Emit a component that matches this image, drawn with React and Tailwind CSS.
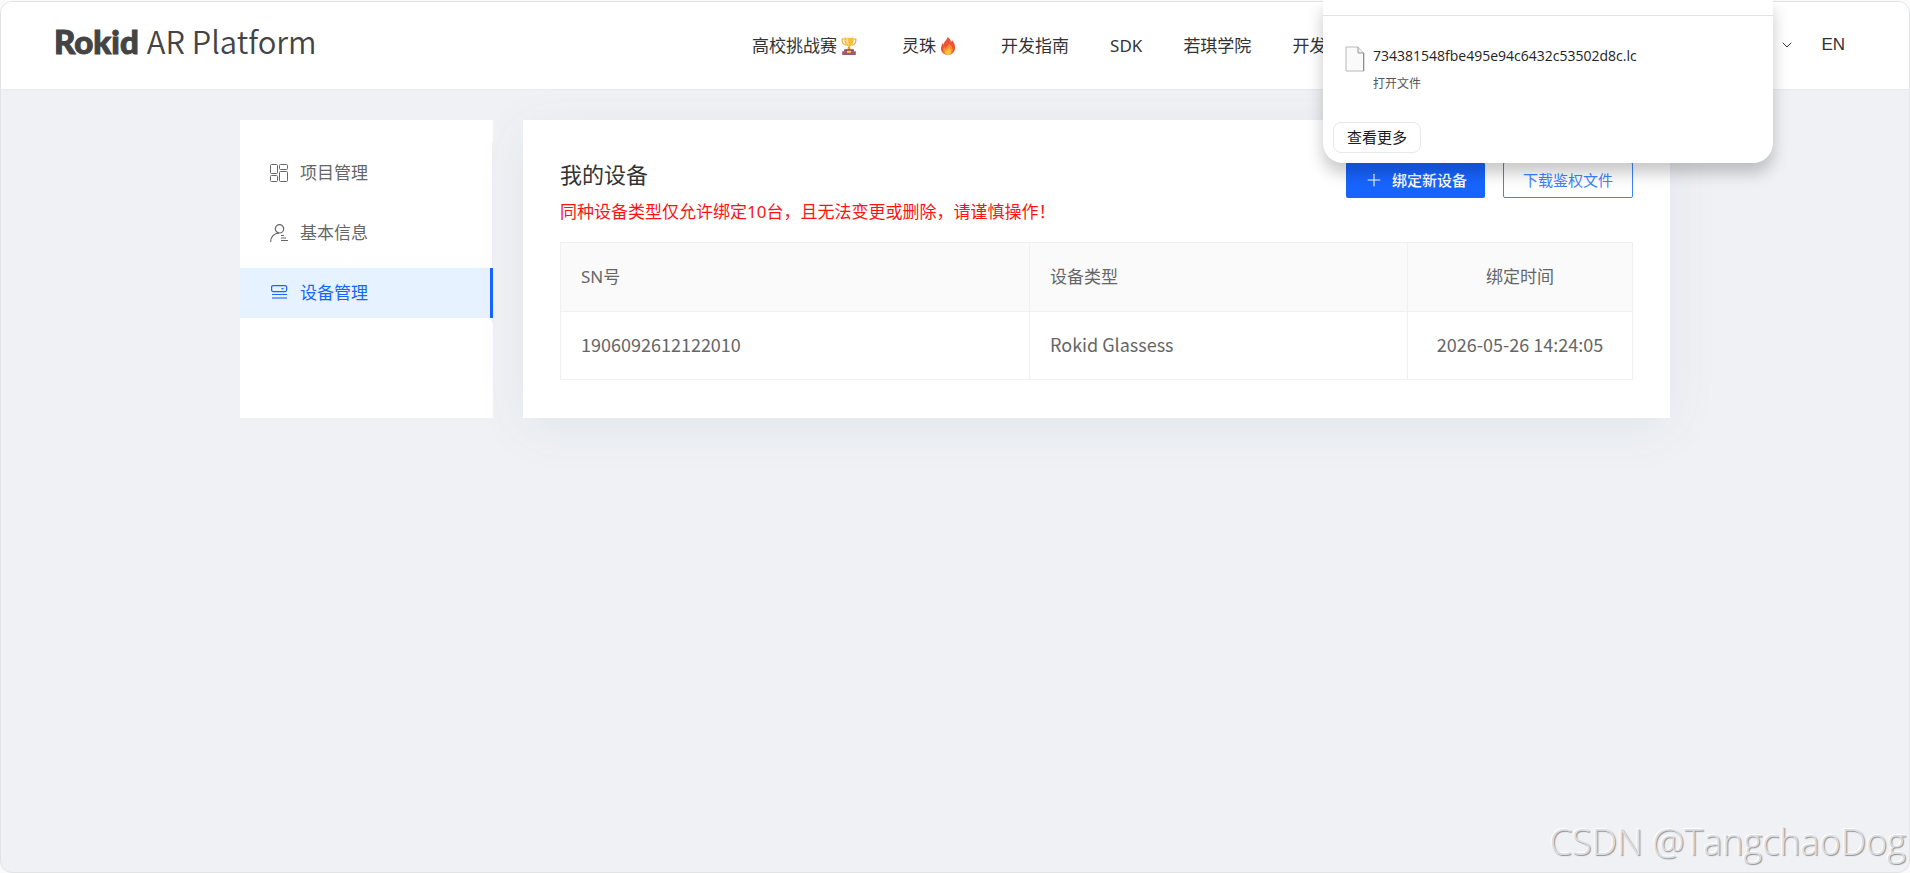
import { ChevronDown, Plus } from 'lucide-react';

function TrophyIcon() {
  return (
    <svg width="16" height="18" viewBox="0 0 16 18" aria-hidden="true">
      <path d="M4 2H1.200C.8 5.500 2 7.600 5 8.200M12 2h2.800c.4 3.500-.8 5.600-3.800 6.200" fill="none" stroke="#f2a93b" strokeWidth="1.200" />
      <path d="M3.400.8h9.200c.2 5-1 8.400-4.600 8.900C4.400 9.200 3.200 5.800 3.400.8z" fill="#fbbd3a" />
      <path d="M5 1.500h2.200c-.2 2.800.2 5 1 7C5.800 7.800 4.900 5 5 1.500z" fill="#fde08a" />
      <path d="M7.100 9.400h1.800l.9 3.600H6.200z" fill="#ef9a2d" />
      <path d="M3.400 12.300h9.200l.6 2.200H2.800z" fill="#8a4a5c" />
      <path d="M1.200 14.300h13.600V18H1.200z" fill="#a3566a" />
      <path d="M6 13.700h4v2H6z" fill="#fbc94b" />
    </svg>
  );
}

function FlameIcon() {
  return (
    <svg width="16" height="18" viewBox="0 0 16 18" aria-hidden="true">
      <path d="M7.600 0c2.500 1.400 3.300 3.300 3.300 5.100.7-.4 1-1.100 1.100-1.900 2.200 2.300 3.300 5 3 8-.3 3.900-3 6.600-6.900 6.600S1 15.300 1 11.700c0-2.600 1-4.200 1.800-6 .2 1 .5 1.600 1 2C3.600 4.300 7.200 3.200 7.600 0z" fill="#ee5138" />
      <path d="M9.500 6c.2 2.200 3.300 3.500 3.300 7 0 2.800-1.900 4.800-4.700 4.800-3 0-5-1.900-5-4.600 0-1.700.7-2.800 1.400-3.700.2 1 .6 1.500 1.200 1.700C5.900 9 9 8.600 9.500 6z" fill="#fb8c2e" />
      <path d="M9 10.500c.2 1.500 2 2 2 4.200 0 1.900-1.200 3.100-2.900 3.100-1.800 0-3-1.200-3-2.900 0-1 .4-1.700.9-2.200.2.600.5.900.9 1 0-1.400 1.700-1.600 2.100-3.200z" fill="#fdc53f" />
    </svg>
  );
}

function ProjectIcon() {
  return (
    <svg width="18" height="18" viewBox="0 0 18 18" fill="none" stroke="currentColor" aria-hidden="true">
      <rect x=".5" y=".5" width="7" height="9" rx="1" />
      <rect x="9.500" y=".5" width="8" height="5" rx="1" />
      <rect x=".5" y="11.500" width="7" height="6" rx="1" />
      <rect x="9.500" y="7.500" width="8" height="10" rx="1" />
    </svg>
  );
}

function ProfileIcon() {
  return (
    <svg width="18" height="18" viewBox="0 0 18 18" fill="none" stroke="currentColor" strokeWidth="1.200" aria-hidden="true">
      <circle cx="9.500" cy="4.800" r="4.200" />
      <path d="M.6 18c0-5 3.400-8.900 8.400-9M11 11.500h3M11 14h5M11 16.500h7" />
    </svg>
  );
}

function DeviceIcon() {
  return (
    <svg width="18" height="18" viewBox="0 0 18 18" fill="none" stroke="currentColor" aria-hidden="true">
      <rect x="1.600" y="1.600" width="15" height="6" rx="1.500" strokeWidth="1.200" />
      <path d="M11.500 4.700h2" strokeWidth="1.400" />
      <path d="M2 10.500h15" />
      <path d="M2 14h15" strokeWidth="2" opacity=".55" />
    </svg>
  );
}

function FileIcon() {
  return (
    <svg width="20" height="26" viewBox="0 0 20 26" aria-hidden="true">
      <path d="M1 1h12l6 6v18H1z" fill="#fafafa" stroke="#b8b8b8" />
      <path d="M18.500 7v18" stroke="#8f8f8f" />
      <path d="M13 1v6h6" fill="#ececec" stroke="#9a9a9a" />
    </svg>
  );
}

const menu = [
  { label: '项目管理', Icon: ProjectIcon },
  { label: '基本信息', Icon: ProfileIcon },
  { label: '设备管理', Icon: DeviceIcon, active: true },
];

const devices = [{ sn: '1906092612122010', type: 'Rokid Glassess', time: '2026-05-26 14:24:05' }];

function Header() {
  return (
    <header className="flex h-[88px] items-center border-b border-[#e9eaee] bg-white pr-16 pl-[53px]">
      <a href="#home" className="flex items-baseline gap-2 pb-[10px] text-[#444]">
        <span className="font-[Lato] text-[33px] leading-10 font-black [-webkit-text-stroke:1px_#444]">Rokid</span>
        <span className="font-['Noto_Sans_CJK_SC','Noto_Sans',sans-serif] text-[31px] leading-10 font-[350]">AR Platform</span>
      </a>
      <nav className="ml-auto flex items-center gap-[41px] text-[17px] whitespace-nowrap text-[#333]">
        <a href="#contest" className="flex items-center gap-1 pr-1">高校挑战赛<TrophyIcon /></a>
        <a href="#lingzhu" className="flex items-center gap-1 pr-1">灵珠<FlameIcon /></a>
        <a href="#guide">开发指南</a>
        <a href="#sdk">SDK</a>
        <a href="#academy">若琪学院</a>
        <a href="#dev">开发</a>
      </nav>
      <div className="ml-[453px] flex items-center gap-[26px] pb-0.5 text-[#333]">
        <button type="button" aria-label="展开菜单"><ChevronDown size={16} strokeWidth={1.5} /></button>
        <button type="button" className="font-['Liberation_Sans',sans-serif] text-[17px]">EN</button>
      </div>
    </header>
  );
}

function Sidebar() {
  return (
    <aside className="w-[253px] shrink-0 bg-white pt-[23px]">
      <ul className="border-r border-[#f0f0f0]">
        {menu.map(({ label, Icon, active }) => (
          <li key={label} className="py-[5px]">
            <a
              href={'#' + label}
              className={
                active
                  ? '-mr-px flex h-[50px] items-center gap-3 border-r-3 border-[#1764ff] bg-[#e6f2ff] pl-[30px] text-[17px] text-[#1764ff]'
                  : 'flex h-[50px] items-center gap-3 pl-[30px] text-[17px] text-[#666]'
              }
            >
              <Icon />
              {label}
            </a>
          </li>
        ))}
      </ul>
    </aside>
  );
}

function DevicePanel() {
  return (
    <main className="min-w-0 flex-1 bg-white px-[37px] pt-[37px] pb-[38px] shadow-[0_10px_50px_rgba(20,100,120,0.07)]">
      <div className="flex items-start justify-between">
        <div>
          <h1 className="text-[22px] leading-[34px] text-[#333]">我的设备</h1>
          <p className="mt-[6px] text-[17px] leading-[30px] text-[#fb1414]">同种设备类型仅允许绑定10台，且无法变更或删除，请谨慎操作！</p>
        </div>
        <div className="mt-[5px] flex gap-[18px] text-[15px]">
          <button type="button" className="flex h-9 items-center gap-2 rounded-xs bg-[#1764ff] px-[18px] font-medium text-white">
            <Plus size={20} strokeWidth={1.3} />
            绑定新设备
          </button>
          <button type="button" className="h-9 rounded-xs border border-[#3d83ff] bg-white px-[19px] text-[#3d83ff]">下载鉴权文件</button>
        </div>
      </div>
      <table className="mt-[15px] w-full table-fixed border-collapse text-[17px] text-[#666]">
        <colgroup>
          <col />
          <col className="w-[378px]" />
          <col className="w-[225px]" />
        </colgroup>
        <thead className="bg-[#fafafa]">
          <tr className="h-[69px]">
            <th className="border border-[#f0f0f0] px-5 text-left font-normal">SN号</th>
            <th className="border border-[#f0f0f0] px-5 text-left font-normal">设备类型</th>
            <th className="border border-[#f0f0f0] px-5 text-center font-normal">绑定时间</th>
          </tr>
        </thead>
        <tbody className="font-['Noto_Sans_CJK_SC',sans-serif] text-lg">
          {devices.map((d) => (
            <tr key={d.sn} className="h-[68px]">
              <td className="border border-[#f0f0f0] px-5 pb-1">{d.sn}</td>
              <td className="border border-[#f0f0f0] px-5 pb-1">{d.type}</td>
              <td className="border border-[#f0f0f0] px-5 pb-1 text-center whitespace-nowrap">{d.time}</td>
            </tr>
          ))}
        </tbody>
      </table>
    </main>
  );
}

function DownloadPopup() {
  return (
    <section
      aria-label="下载"
      className="absolute top-0 right-[137px] w-[450px] rounded-b-[20px] bg-white pt-[15px] pb-[10px] font-['Open_Sans','Noto_Sans_CJK_SC',sans-serif] shadow-[0_10px_16px_rgba(0,0,0,0.22)]"
    >
      <div className="flex gap-2 border-t border-[#e3e3e3] px-[22px] pt-[30px]">
        <FileIcon />
        <div>
          <p className="text-sm leading-5 text-[#222]">734381548fbe495e94c6432c53502d8c.lc</p>
          <a href="#open" className="mt-2 block text-xs leading-5 text-[#555]">打开文件</a>
        </div>
      </div>
      <button type="button" className="mt-7 ml-[10px] block h-[31px] rounded-lg border border-[#e8e8e8] px-[13px] text-[15px] text-[#1b1b1b]">
        查看更多
      </button>
    </section>
  );
}

export default function App() {
  return (
    <div className="relative flex min-h-screen flex-col bg-[#fafafa] pt-px font-['Noto_Sans','Noto_Sans_CJK_SC',sans-serif]">
      <div className="flex flex-1 flex-col overflow-hidden rounded-xl border border-[#e2e3e5] bg-[#f0f1f5]">
        <Header />
        <div className="mx-auto mt-[30px] flex w-full max-w-[1430px] gap-[30px]">
          <Sidebar />
          <DevicePanel />
        </div>
      </div>
      <DownloadPopup />
      <div className="absolute right-1 bottom-[6px] font-['Open_Sans',sans-serif] text-4xl leading-[50px] font-light text-[#dcdde0] [text-shadow:1px_1px_1px_#8f9194,-1px_-1px_1px_#ffffff]">
        CSDN @TangchaoDog
      </div>
    </div>
  );
}
